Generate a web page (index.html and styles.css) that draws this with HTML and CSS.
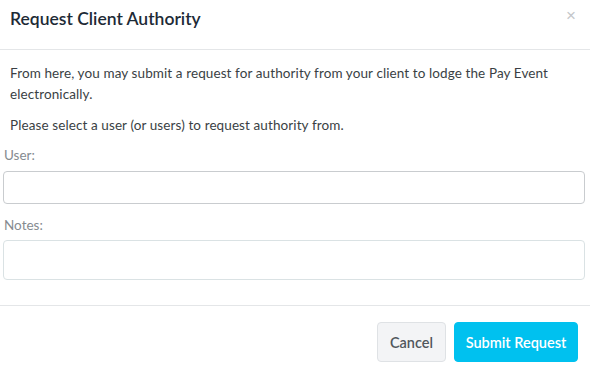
FILE: index.html
```html
<!doctype html>
<html lang="en-US">

<head>
  <meta charset="UTF-8" />
  <title>Request Client Authority</title>
  <link rel="stylesheet" href="styles.css">
</head>

<body>
  <div class="modal">
    <div class="modal-header">
      <h3>Request Client Authority</h3>
      <button class="close" type="button">&times;</button>
    </div>

    <div class="modal-body">
      <p>From here, you may submit a request for authority from your client to lodge the Pay Event electronically.</p>
      <p>Please select a user (or users) to request authority from.</p>

      <div class="field">
        <label>User:</label>
        <input type="text" class="user-input">
      </div>
      <div class="field">
        <label>Notes:</label>
        <textarea class="notes-input"></textarea>
      </div>
    </div>

    <div class="modal-footer">
      <button class="btn btn-cancel">Cancel</button>
      <button class="btn btn-submit">Submit Request</button>
    </div>
  </div>
</body>

</html>
```

FILE: styles.css
```css
body {
  margin: 0;
  padding: 0;
  font-family: Lato, "Open Sans", Arial, sans-serif;
  color: #3a3f44;
  background-color: #fff;
}

.modal {
  width: 590px;
}

.modal-header {
  height: 50px;
  border-bottom: 1px solid #e4e6e8;
  display: flex;
  align-items: center;
  justify-content: space-between;
  padding: 0 14px 12px 10px;
  box-sizing: border-box;
}

.modal-header h3 {
  margin: 0;
  font-size: 17.5px;
  font-weight: 600;
  color: #1d2a36;
}

.close {
  border: none;
  background: none;
  padding: 0;
  font-size: 17px;
  line-height: 1;
  color: #c4c7ca;
  cursor: pointer;
  margin-top: -6px;
}

.modal-body {
  padding: 13px 5px 0 3px;
}

.modal-body p {
  margin: 0 0 10px 7px;
  font-size: 13.5px;
  line-height: 21px;
  letter-spacing: 0.1px;
}

.field {
  display: flex;
  flex-direction: column;
  margin-bottom: 12px;
}

.field label {
  font-size: 13.5px;
  line-height: 18px;
  color: #858b90;
  margin: 0 0 7px 1px;
}

.user-input,
.notes-input {
  box-sizing: border-box;
  width: 100%;
  border-radius: 4px;
  font: inherit;
  outline: none;
}

.user-input {
  height: 33px;
  border: 1px solid #c9cccf;
}

.notes-input {
  height: 40px;
  border: 1px solid #dae2e4;
  resize: none;
  margin-top: -1px;
}

.modal-footer {
  margin-top: 25px;
  border-top: 1px solid #e4e6e8;
  padding: 16px 12px 0 0;
  display: flex;
  justify-content: flex-end;
  gap: 8px;
}

.btn {
  height: 40px;
  border-radius: 4px;
  font-family: inherit;
  font-size: 14.5px;
  font-weight: 600;
  cursor: pointer;
}

.btn-cancel {
  width: 69px;
  background-color: #f3f4f6;
  border: 1px solid #dfe2e5;
  color: #51575d;
}

.btn-submit {
  width: 124px;
  background-color: #00c1ef;
  border: 1px solid #00c1ef;
  color: #fff;
}
```
